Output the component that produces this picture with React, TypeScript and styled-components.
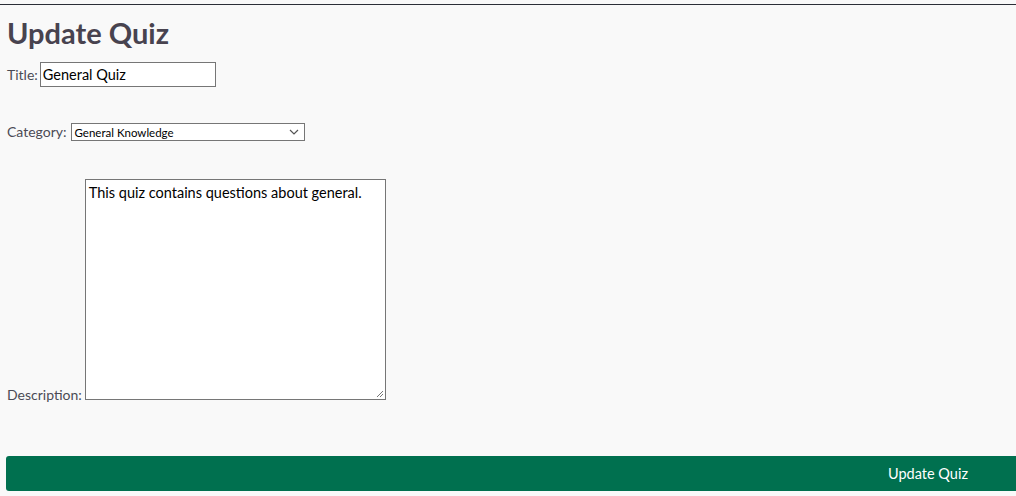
import React from "react";
import styled, { createGlobalStyle } from "styled-components";

const Global = createGlobalStyle`
  html, body { margin: 0; padding: 0; background: #f9f9f9; overflow: hidden; }
  body { font-family: "Segoe UI", Lato, "Open Sans", sans-serif; }
`;

const Page = styled.div`
  margin-top: 4px;
  border-top: 1px solid #2b2e37;
  padding: 0 0 0 6px;
  width: 100%;
  box-sizing: border-box;
`;

const Heading = styled.h1`
  margin: 10px 0 0 1px;
  font-family: "Segoe UI", Lato, sans-serif;
  font-size: 29px;
  line-height: 36px;
  font-weight: 700;
  color: #48434f;
`;

const Form = styled.form`
  display: flex;
  flex-direction: column;
  margin-top: 11px;
`;

const Row = styled.div<{ $gap: number; $bottom?: boolean }>`
  display: flex;
  align-items: ${(p) => (p.$bottom ? "flex-end" : "center")};
  margin-bottom: ${(p) => p.$gap}px;
  padding-left: 1px;
`;

const Label = styled.label<{ $gapRight?: number; $drop?: number }>`
  font-family: "Segoe UI", Lato, sans-serif;
  font-size: 14px;
  line-height: 16px;
  color: #4b4b55;
  margin-right: ${(p) => p.$gapRight ?? 3}px;
  margin-bottom: ${(p) => -(p.$drop ?? 0)}px;
`;

const TextInput = styled.input`
  box-sizing: border-box;
  width: 176px;
  height: 25px;
  margin: 0;
  border: 1px solid #767676;
  background: #fff;
  padding: 1px 2px;
  font-family: "Segoe UI", Lato, sans-serif;
  font-size: 14.5px;
  color: #000;
  outline: none;
`;

const SelectBox = styled.div`
  display: flex;
  align-items: center;
  justify-content: space-between;
  box-sizing: border-box;
  width: 234px;
  height: 18px;
  border: 1px solid #767676;
  background: #fff;
  padding: 0 4px 0 3px;
  font-family: "Segoe UI", Lato, sans-serif;
  font-size: 11.5px;
  color: #000;
`;

const Chevron = styled.svg`
  width: 10px;
  height: 6px;
  margin-right: 1px;
`;

const TextArea = styled.div`
  position: relative;
  box-sizing: border-box;
  width: 301px;
  height: 221px;
  border: 1px solid #767676;
  background: #fff;
  padding: 4px 3px;
  font-family: "Segoe UI", Lato, sans-serif;
  font-size: 14.5px;
  line-height: 18px;
  color: #000;
`;

const Grip = styled.svg`
  position: absolute;
  right: 1px;
  bottom: 1px;
  width: 9px;
  height: 9px;
`;

const SubmitButton = styled.button`
  display: flex;
  justify-content: flex-end;
  align-items: center;
  width: 1040px;
  height: 35px;
  margin: 0;
  padding: 0 78px 0 0;
  border: none;
  border-radius: 3px;
  background: #00704f;
  color: #fff;
  font-family: "Segoe UI", Lato, sans-serif;
  font-size: 14.5px;
  cursor: pointer;
`;

export default function App() {
  return (
    <>
      <Global />
      <Page>
        <Heading>Update Quiz</Heading>
        <Form onSubmit={(e) => e.preventDefault()}>
          <Row $gap={36}>
            <Label $gapRight={2}>Title:</Label>
            <TextInput defaultValue="General Quiz" />
          </Row>
          <Row $gap={38}>
            <Label $gapRight={4}>Category:</Label>
            <SelectBox>
              <span>General Knowledge</span>
              <Chevron viewBox="0 0 10 6">
                <path d="M1 1 L5 5 L9 1" fill="none" stroke="#555" strokeWidth="1.2" />
              </Chevron>
            </SelectBox>
          </Row>
          <Row $gap={56} $bottom>
            <Label $drop={3}>Description:</Label>
            <TextArea>
              This quiz contains questions about general.
              <Grip viewBox="0 0 9 9">
                <path d="M8 2 L2 8 M8 5 L5 8" stroke="#777" strokeWidth="1" />
              </Grip>
            </TextArea>
          </Row>
          <SubmitButton type="submit">Update Quiz</SubmitButton>
        </Form>
      </Page>
    </>
  );
}
